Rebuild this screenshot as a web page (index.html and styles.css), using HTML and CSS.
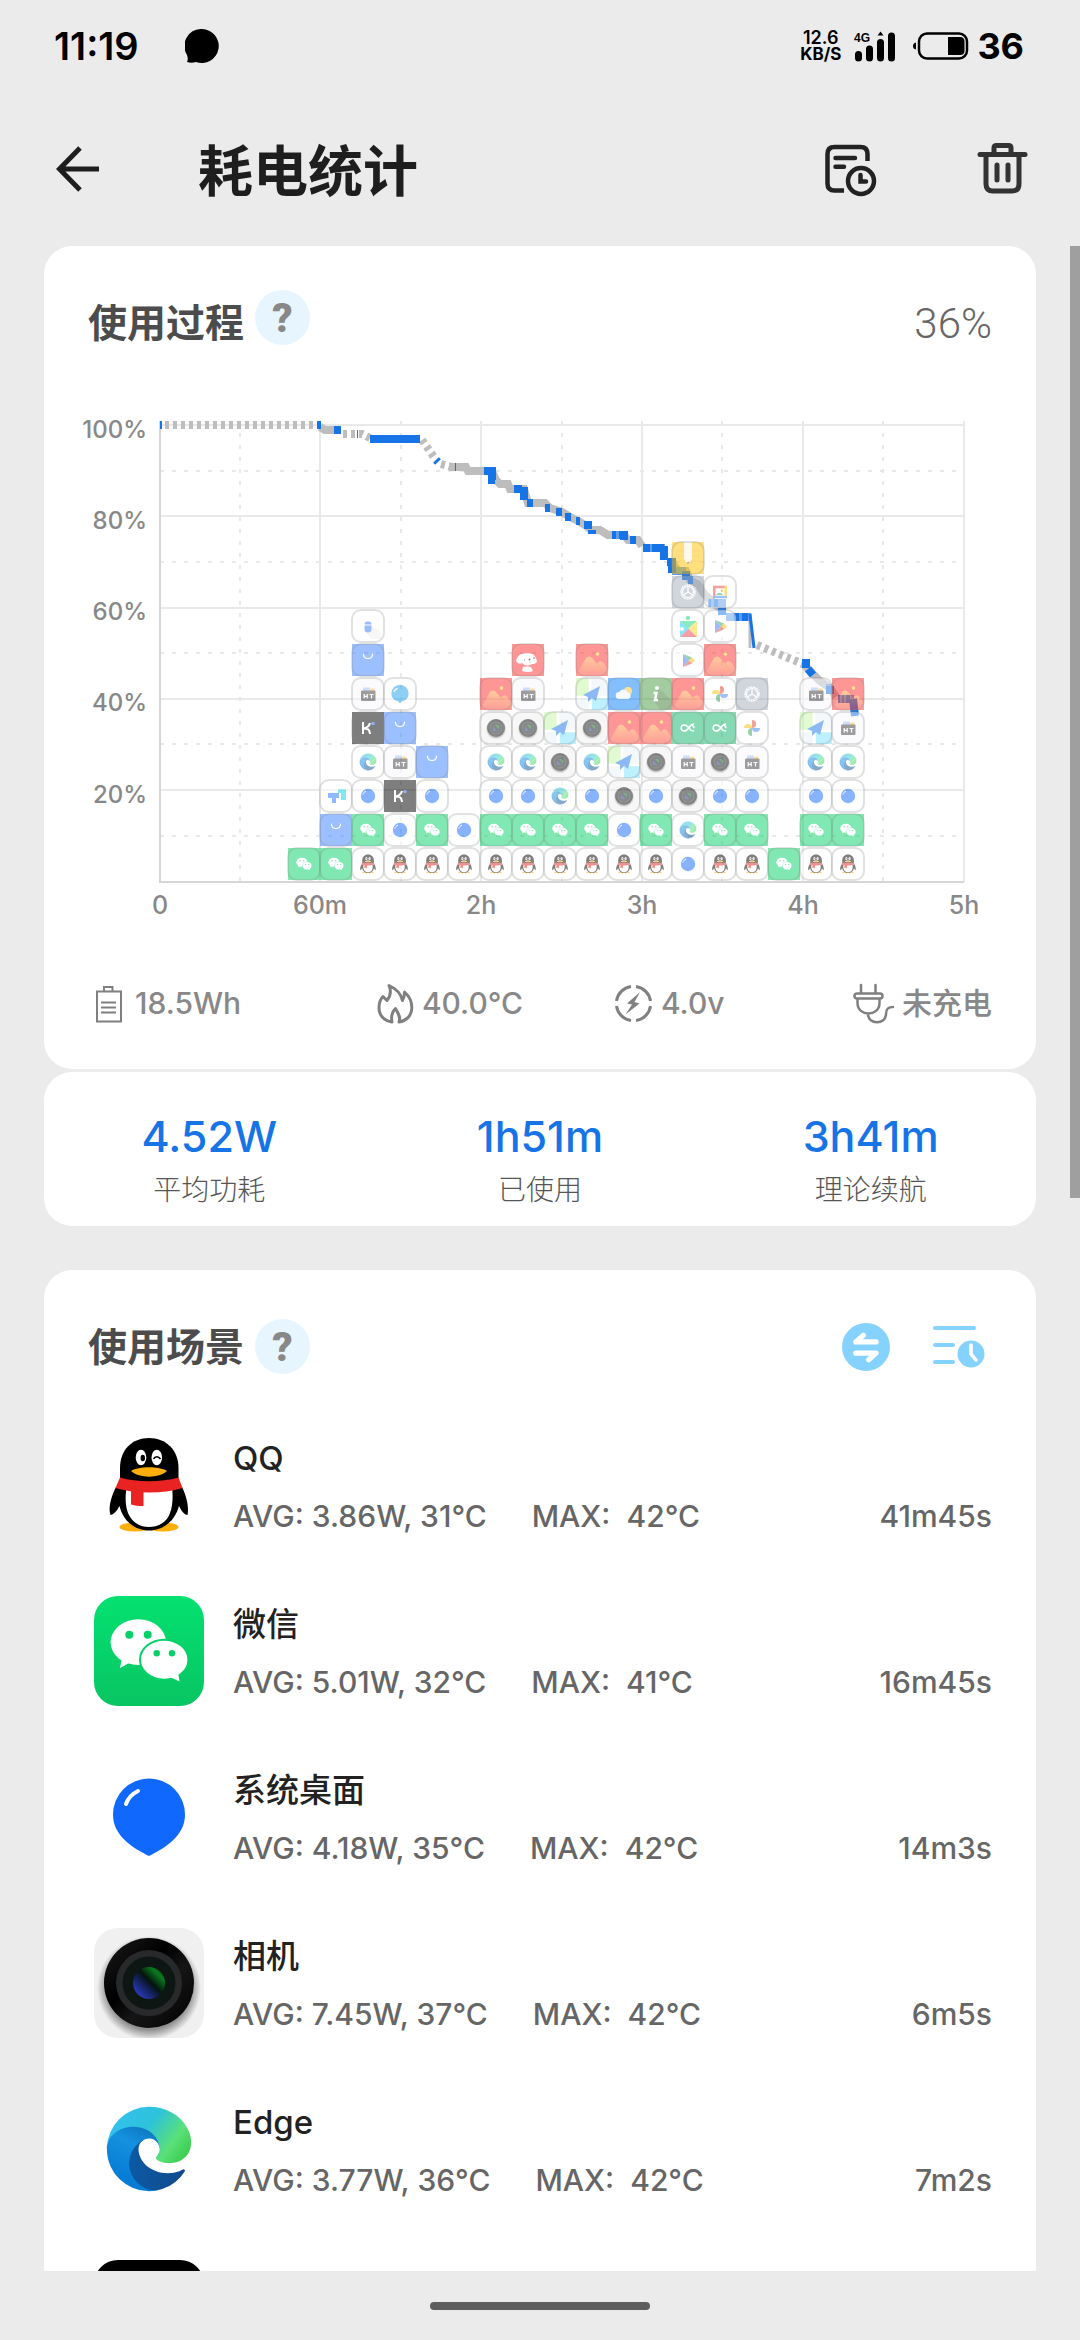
FILE: index.html
```html
<!DOCTYPE html>
<html lang="zh-CN">
<head>
<meta charset="utf-8">
<meta name="viewport" content="width=device-width, initial-scale=1">
<title>耗电统计</title>
<link rel="stylesheet" href="styles.css">
</head>
<body>
<svg class="sprite" aria-hidden="true">
  <defs>
    <linearGradient id="g-wx" x1="0" y1="0" x2="0" y2="1"><stop offset="0" stop-color="#04e170"/><stop offset="1" stop-color="#08c562"/></linearGradient>
    <linearGradient id="g-edge1" x1="0" y1="0" x2="1" y2="0"><stop offset="0" stop-color="#0c5aa6"/><stop offset="1" stop-color="#114a8b"/></linearGradient>
    <linearGradient id="g-edge2" x1="0.6" y1="0" x2="0.2" y2="1"><stop offset="0" stop-color="#0f75bd"/><stop offset="0.3" stop-color="#1591e0"/><stop offset="1" stop-color="#0074d0"/></linearGradient>
    <linearGradient id="g-edge3" x1="0" y1="0.2" x2="1" y2="0.7"><stop offset="0" stop-color="#36bff2"/><stop offset="0.45" stop-color="#2cc3da"/><stop offset="0.8" stop-color="#5be078"/><stop offset="1" stop-color="#3fcf55"/></linearGradient>
    <linearGradient id="g-lens" x1="0.1" y1="0.9" x2="0.9" y2="0.1"><stop offset="0" stop-color="#2c40c8"/><stop offset="0.35" stop-color="#14205c"/><stop offset="0.55" stop-color="#04130c"/><stop offset="0.85" stop-color="#087a1e"/><stop offset="1" stop-color="#045012"/></linearGradient>
    <linearGradient id="g-ring" x1="0" y1="0" x2="1" y2="1"><stop offset="0" stop-color="#1c1c1c"/><stop offset="0.4" stop-color="#000"/><stop offset="0.6" stop-color="#151515"/><stop offset="1" stop-color="#000"/></linearGradient>
    <radialGradient id="g-shadow"><stop offset="0.8" stop-color="#000" stop-opacity="0.4"/><stop offset="1" stop-color="#000" stop-opacity="0"/></radialGradient>
    <linearGradient id="g-hill" x1="0" y1="0" x2="0" y2="1"><stop offset="0" stop-color="#ff9a3c"/><stop offset="1" stop-color="#ff3a34"/></linearGradient>
  </defs>
  <symbol id="qq" viewBox="0 0 110 110">
    <ellipse cx="41" cy="97" rx="15.500" ry="4.500" fill="#fbae0c"/><ellipse cx="69" cy="97" rx="15.500" ry="4.500" fill="#fbae0c"/>
    <path d="M22 57C17 67 14 78 16.500 85c2 0 6-3 9-9C29 91 41 100.500 55 100.500S81 91 85 76c3 6 6 9 8.500 9C95 78 93 67 88 57Z"/>
    <path d="M26 50V38C26 20 38 8 55 8s29.500 12 29.500 30v14H26Z"/>
    <path d="M33 56c-2 9-2 19 1 27 4 9 11 14 21 14s18-5 21-14c3-8 3-18 2-27Z" fill="#fff"/>
    <path d="M26 47.500c17 5 41 5 58.500 0L88.500 58C69 64 42 64 21.500 58Z" fill="#e92322"/>
    <path d="M37 60h12.500v16C45 76 41 76 37 74.500Z" fill="#e92322"/>
    <ellipse cx="47" cy="27.500" rx="5.300" ry="7.700" fill="#fff"/><ellipse cx="62.800" cy="27.500" rx="5.300" ry="7.700" fill="#fff"/>
    <ellipse cx="48.800" cy="28" rx="2.200" ry="3.300"/><path d="M59.500 29c1.500-3 5-3 7 0" fill="none" stroke="#000" stroke-width="1.600"/>
    <path d="M37 41c8-5 28-5 36 0-8 7.500-28 7.500-36 0Z" fill="#fbae0c"/>
  </symbol>
  <symbol id="wx" viewBox="0 0 110 110">
    <ellipse cx="44.300" cy="46.200" rx="27.700" ry="22.900" fill="#fff"/><path d="M28 62l-2 10 9-5Z" fill="#fff"/>
    <ellipse cx="70.200" cy="63.700" rx="24.200" ry="20" fill="#fff" stroke="#06d169" stroke-width="2"/><path d="M76 81l9.500 4.500L84 76Z" fill="#fff"/>
    <g fill="#06d169"><circle cx="35.300" cy="38.700" r="4"/><circle cx="53.700" cy="38.700" r="4"/><circle cx="62.700" cy="57.300" r="3.200"/><circle cx="78" cy="57.300" r="3.200"/></g>
  </symbol>
  <symbol id="home" viewBox="0 0 110 110"><path d="M55 94C39 86 19 74 19 52.500a36 36 0 0 1 72 0C91 74 71 86 55 94Z" fill="#1168fd"/><path d="M32 42c2-6 6-10 12-13" fill="none" stroke="#fff" stroke-width="4" stroke-linecap="round"/></symbol>
  <symbol id="dot" viewBox="0 0 110 110"><circle cx="55" cy="55" r="36" fill="#1168fd"/><path d="M30 46c2-7 6-11 13-14" fill="none" stroke="#fff" stroke-width="5" stroke-linecap="round"/></symbol>
  <symbol id="sky" viewBox="0 0 110 110"><path d="M55 102L44 90C24 87 12 71 12 52a43 43 0 0 1 86 0c0 19-12 35-32 38Z" fill="#1fa0ee"/><path d="M26 43c2-8 8-12 14-15" fill="none" stroke="#fff" stroke-width="6" stroke-linecap="round"/></symbol>
  <symbol id="camera" viewBox="0 0 110 110">
    <circle cx="55" cy="60" r="52" fill="url(#g-shadow)"/><circle cx="55" cy="55" r="45" fill="url(#g-ring)"/><circle cx="55" cy="55" r="33" fill="#28292b"/><circle cx="55" cy="55" r="26.500" fill="#0e1613"/><circle cx="55" cy="55" r="16" fill="url(#g-lens)"/>
  </symbol>
  <symbol id="edge" viewBox="-39 -39 334 334">
    <path fill="url(#g-edge1)" d="M231 190.500c-3.400 1.800-6.900 3.400-10.500 4.700a101.500 101.500 0 0 1-35.900 6.500c-47.300 0-88.500-32.500-88.500-74.300 0-11.400 6.400-21.900 16.400-27.300-42.800 1.800-53.800 46.400-53.800 72.500 0 73.900 68.100 81.400 82.800 81.400 7.900 0 19.800-2.300 27-4.600l1.300-.4a128.300 128.300 0 0 0 66.600-52.800 4 4 0 0 0-5.400-5.700z"/>
    <path fill="url(#g-edge2)" d="M105.700 241.400a79.200 79.200 0 0 1-22.700-21.300 80.700 80.700 0 0 1 29.500-120c3.200-1.500 8.500-4.100 15.600-4a32.400 32.400 0 0 1 25.700 13 31.900 31.900 0 0 1 6.300 18.700c0-.2 24.500-79.600-80-79.600-43.900 0-80 41.600-80 78.200a130.200 130.200 0 0 0 12.100 56 128 128 0 0 0 156.400 67 75.500 75.500 0 0 1-62.800-8z"/>
    <path fill="url(#g-edge3)" d="M152.300 148.900c-.9 1-3.300 2.500-3.300 5.700 0 2.600 1.700 5.100 4.700 7.200 14.400 10 41.500 8.700 41.600 8.700 10.700 0 21.100-2.900 30.300-8.300A61.400 61.400 0 0 0 256 109.100c.3-22.400-8-37.300-11.300-43.900C223.500 23.900 177.700 0 128 0A128 128 0 0 0 0 126.200c.5-36.500 36.800-66 80-66 3.500 0 23.500.3 42 10.100a72.600 72.600 0 0 1 30.900 29.300c6.100 10.600 7.200 24.100 7.200 29.500s-2.700 13.300-7.800 19.800z"/>
  </symbol>
  <symbol id="bag" viewBox="0 0 32 32"><path d="M11.500 10c0 6 9 6 9 0" fill="none" stroke="#fff" stroke-width="1.200" stroke-linecap="round"/></symbol>
  <symbol id="bug" viewBox="0 0 32 32"><path d="M18 14l11 9v6H19l-6-8Z" fill="#f0f0f0"/><path d="M12.500 15.500h7V19a3.500 3.500 0 0 1-7 0Zm0-1a3.500 3 0 0 1 7 0Z" fill="#3c7af5"/></symbol>
  <symbol id="team" viewBox="0 0 32 32"><path d="M18 9.500h8V20h-5v-7h-3Z" fill="#00d5e8"/><path d="M8 13h11v5h-3v5h-4v-5H8Z" fill="#2277ff"/></symbol>
  <symbol id="kiwi" viewBox="0 0 32 32"><path d="M11 10v12M18 11c-1 4-4 5-7 5.500 4 0 6.500 0 7 5.500" fill="none" stroke="#fff" stroke-width="2"/><circle cx="21" cy="11.500" r="1.800" fill="#2b62f5"/></symbol>
  <symbol id="tools" viewBox="0 0 32 32"><path d="M11 13v-3.500h7V13Z" fill="#9bbcff"/><path d="M17 10.500h5.500V13H17Z" fill="#ffc240"/><rect x="9" y="12.500" width="14.500" height="10.500" rx="1" fill="#3c3c3c"/><path d="M12.200 16v4.500m3-4.500v4.500m-3-2.200h3M17.500 16.500h4m-2 0v4" fill="none" stroke="#fff" stroke-width="1.200"/></symbol>
  <symbol id="gallery" viewBox="0 0 32 32"><path d="M0 32L10 14c2-2 4-2 6 0l5 6c3-4 5-3 7 0l4 6v6Z" fill="url(#g-hill)"/><path d="M21 20l8 9" stroke="#ff5a38" stroke-width="1"/><circle cx="21.500" cy="10" r="1.800" fill="#ffd02e"/></symbol>
  <symbol id="dog" viewBox="0 0 32 32"><path d="M4 17c1-4 3-6 5-7 4-1 9-1 12 0l3 4 1 4-3 2h-2c-2 2-8 2-10-1-2 1-4 1-6-2ZM11 23q4-1 8 0l2 4q-5 2-11 0Z" fill="#fff"/><circle cx="17.500" cy="15.500" r="1"/><circle cx="22" cy="14" r=".8"/><circle cx="12.500" cy="16" r=".5"/><circle cx="18" cy="18" r=".5"/></symbol>
  <symbol id="map" viewBox="0 0 32 32"><path d="M0 0h13v17L0 20Z" fill="#c4f7a4"/><path d="M16 20h16v12H16Z" fill="#7ee5ff"/><path d="M14 0v32M0 19l32 0" stroke="#fff" stroke-width="2.500"/><path d="M7 17L24 8 20 23l-4-3-4 4v-5Z" fill="#1b76ea"/></symbol>
  <symbol id="weather" viewBox="0 0 32 32"><circle cx="20" cy="13" r="4" fill="#ffc42d"/><path d="M11 21a3.500 3.500 0 0 1 .5-7c1-3.500 7-3.500 8 .5 4 0 4.500 6.500 0 6.500Z" fill="#eef6ff"/></symbol>
  <symbol id="info" viewBox="0 0 32 32"><path d="M18 9l14 14v9H20l-6-9Z" fill="#3d7d34"/><circle cx="17" cy="10" r="2" fill="#fff"/><path d="M13.500 15h3l-1.500 7h3" fill="none" stroke="#fff" stroke-width="2.500"/></symbol>
  <symbol id="loop" viewBox="0 0 32 32"><path d="M21.500 12C17 12 17 19 12.500 19s-4.500-6 0-6 4 6 9 6M20 12.500l2 3" fill="none" stroke="#fff" stroke-width="1.600" stroke-linecap="round"/></symbol>
  <symbol id="photos" viewBox="0 0 32 32"><path d="M16 16V8a4 4 0 0 1 0 8Z" fill="#ea4335"/><path d="M16 16h8a4 4 0 0 1-8 0Z" fill="#4285f4"/><path d="M16 16v8a4 4 0 0 1 0-8Z" fill="#34a853"/><path d="M16 16H8a4 4 0 0 1 8 0Z" fill="#fbbc04"/></symbol>
  <symbol id="play" viewBox="0 0 32 32"><path d="M11 10v13l6-6.500Z" fill="#3d7cf5"/><path d="M11 10l6 6.500 3-3Z" fill="#34a853"/><path d="M20 13.500l-3 3 3 3 3-3Z" fill="#fbbc04"/><path d="M11 23l6-6.500 3 3Z" fill="#ea4335"/></symbol>
  <symbol id="puzzle" viewBox="0 0 32 32"><path d="M8 11h17L16 19Z" fill="#17d67d"/><circle cx="16" cy="8" r="2.200" fill="#17d67d"/><path d="M8 11l9 8-9 8Z" fill="#1cc8f5"/><path d="M25 11l-9 8 9 8Z" fill="#ffd52e"/><path d="M8 27l8.500-8 8.500 8Z" fill="#ee4050"/><circle cx="10" cy="19" r="2" fill="#fff"/></symbol>
  <symbol id="gear" viewBox="0 0 32 32"><circle cx="16" cy="16" r="7" fill="none" stroke="#fff" stroke-width="1.400" stroke-dasharray="2 .6"/><circle cx="16" cy="16" r="5.500" fill="none" stroke="#fff" stroke-width="1.200"/><path d="M16 16V11M16 16l4.500 3M16 16l-4.500 3" stroke="#fff" stroke-width="1.300"/></symbol>
  <symbol id="frame" viewBox="0 0 32 32"><path d="M9 11h14" stroke="#ea4335" stroke-width="2.500"/><path d="M10.200 12v10" stroke="#ea4335" stroke-width="2.500"/><path d="M9 21h14" stroke="#4285f4" stroke-width="2.500"/><path d="M21.800 10v10" stroke="#fbbc04" stroke-width="2.500"/><path d="M12 19c2-3 5-3 7 0Z" fill="#34a853"/><circle cx="18" cy="14.500" r="1.200" fill="#fbbc04"/></symbol>
  <symbol id="pencil" viewBox="0 0 32 32"><path d="M3 9h26M3 14h26M3 19h26" stroke="#f9b000" stroke-width="1"/><path d="M12 0h8v17l-4 6-4-6Z" fill="#fff4dc"/><path d="M14.700 20h2.600L16 23Z" fill="#8a5a20"/></symbol>
</svg>

<header class="status">
  <div class="status-left">
    <time class="clock">11:19</time>
    <svg width="34" height="34" viewBox="0 0 34 34"><path d="M17 0a17 17 0 1 1-6 33c-3 1-6 1-9 0 1-2 1-4 0-7A17 17 0 0 1 17 0Z"/></svg>
  </div>
  <div class="status-right">
    <div class="net"><span>12.6</span><b>KB/S</b></div>
    <svg class="signal" width="42" height="32" viewBox="0 0 42 32"><text x="1" y="12" class="signal-text">4G</text><g stroke="#000" stroke-width="7" stroke-linecap="round"><path d="M5.500 24.500V28M16.500 19v9M27.500 12.500V28M38.500 6v22"/></g><path d="M24.500 5.500l3-4 3 4Z"/></svg>
    <svg class="battery" width="56" height="28" viewBox="0 0 56 28"><rect x="6" y="1.500" width="48" height="25" rx="8" fill="none" stroke="#000" stroke-width="2.500"/><path d="M35 5h12q4.500 0 4.500 4.500v9q0 4.500-4.500 4.500H35Z"/><path d="M3 10.500v7Q0 17 0 14t3-3.500Z"/></svg>
    <span class="charge">36</span>
  </div>
</header>

<div class="appbar">
  <button class="icon-btn" aria-label="返回"><svg width="44" height="46" viewBox="0 0 44 46" fill="none" stroke="#1e1e1e" stroke-width="5"><path d="M43 23H4M24 2L3.500 23 24 44"/></svg></button>
  <h1>耗电统计</h1>
  <div class="appbar-actions">
    <button class="icon-btn" aria-label="历史记录"><svg width="60" height="58" viewBox="0 0 60 58" fill="none" stroke="#222" stroke-width="4.500" stroke-linecap="round"><path d="M47.500 21V14q0-7-7-7h-26q-7 0-7 7v29.500q0 7 7 7H24" stroke-linecap="butt"/><path d="M15.500 18H35M15.500 26.700H24"/><circle cx="41" cy="41" r="13"/><path d="M40.500 35v6.500H46"/></svg></button>
    <button class="icon-btn" aria-label="删除"><svg width="60" height="58" viewBox="0 0 60 58" fill="none" stroke="#333" stroke-width="5" stroke-linecap="round"><path d="M8 14.500H53"/><path d="M22 13V8q0-2.500 2.500-2.500h12Q39 5.500 39 8v5"/><path d="M14 16v28q0 7 7 7h19q7 0 7-7V16M25 25v15M36 25v15"/></svg></button>
  </div>
</div>

<main class="page">
  <section class="card usage">
    <div class="card-head tall">
      <h2>使用过程</h2>
      <button class="help" aria-label="帮助">?</button>
      <span class="level">36%</span>
    </div>
    <svg class="chart" viewBox="88 400 904 530" role="img" aria-label="电量曲线">
      <g class="grid">
        <path d="M160 425H964M160 516H964M160 608H964M160 699H964M160 790H964M320 421V882M481 421V882M642 421V882M803 421V882M964 421V882"/>
        <path stroke-dasharray="4 8" d="M160 471H960M160 562H960M160 653H960M160 744H960M160 836H960M240 421V882M401 421V882M562 421V882M722 421V882M883 421V882"/>
        <path class="axis" d="M160 421V883M160 882H964"/>
      </g>
      <g class="line idle">
        <path stroke-dasharray="4 4" d="M165 425H317M343 434H362L370 438M422 440L436 460M441 464L452 467"/>
        <path d="M320 427L325 430H334M449 467H466L468 471H492L496 480L500 484H508L510 489H524L528 503H545L550 508L562 512L570 517L578 521L585 525L591 530H600L608 535H624L628 540H638L642 546M672 562L678 571H686L690 580L698 584L704 594L714 603L724 612"/>
        <path stroke-width="3" d="M750 614V648"/>
        <path stroke-dasharray="4 4" d="M757 645L803 664"/>
        <path d="M803 664L812 673L820 681L830 688L836 697"/>
      </g>
      <g class="line active pale"><path d="M484 471H492M612 535H626M643 548H665M672 571H686M708 603H722V612M726 617H751M826 688H832M838 699H854"/></g>
      <g class="line active">
        <path d="M160 425H162M317 425H321M334 430H341M357 434H358M370 439H420M436 460L438 462M455 467H456M484 471H492V480H495M514 489H522M524 487V500M527 503H533M545 508H550M556 512H562M565 517H571M576 521H580M584 525H592M592 530V534M612 535H616M619 535H622M624 531V540M630 540H636M643 548H650M652 548H664M664 546V560M667 562H670M672 558V573M686 571V580M688 580H693M709 603H711M714 603H718M722 608V615M734 617H739M742 617H748M806 659V668M808 669L813 675M830 686V694M838 699H840M842 699H844M846 699H850M853 699L855 716"/>
        <path stroke-width="3" d="M750 614L754 648"/>
      </g>
      <g id="tiles"></g>
      <g class="tick end">
        <text x="147" y="438">100%</text><text x="147" y="529">80%</text><text x="147" y="620">60%</text><text x="147" y="711">40%</text><text x="147" y="803">20%</text>
      </g>
      <g class="tick">
        <text x="160" y="914">0</text><text x="320" y="914">60m</text><text x="481" y="914">2h</text><text x="642" y="914">3h</text><text x="803" y="914">4h</text><text x="964" y="914">5h</text>
      </g>
    </svg>
    <ul class="facts">
      <li><svg width="40" height="44" viewBox="0 0 40 44" stroke-width="2"><path d="M9 10.500H33V40.500H9ZM16 10V6H24.500V10M13 21.500H28M13 26.500H28M13 31.500H28"/></svg>18.5Wh</li>
      <li><svg width="40" height="44" viewBox="0 0 40 44" stroke-width="3" stroke-linejoin="round"><path d="M14 4.500C22 8 26 13 27.500 19.500C29 17 29.500 14 29.500 11C34 15 37 21 36.800 27C36.500 35 31 40 24 41C26 36 23 32 20.500 27.500C16 32 16 36 17 41C9 40 4 34 4 27C4 22 5.500 18 8 15.500L12 19.500C15.500 15 16 9 14 4.500Z"/></svg>40.0°C</li>
      <li><svg width="40" height="44" viewBox="0 0 40 44" stroke-width="3"><path d="M17 5.500A17 17 0 0 0 2.500 20M22 5.500A17 17 0 0 1 36.500 20M17 39.500A17 17 0 0 1 2.500 25M22 39.500A17 17 0 0 0 36.500 25"/><path class="solid" d="M26 11L13 22.500 18 23.500 11.500 33.500 25.500 22.500 20.500 21Z"/></svg>4.0v</li>
      <li><svg width="42" height="44" viewBox="0 0 42 44" stroke-width="2.500" stroke-linecap="round"><path d="M8 4v8M22.500 4v8"/><rect x="1.500" y="12.500" width="28" height="5" rx="2.500"/><path d="M4.500 18v4c0 14 22 14 22 0V18M15 33c0 11 18 11 18 0 0-5 2-7 7-7"/></svg>未充电</li>
    </ul>
  </section>

  <section class="card summary">
    <div><strong>4.52W</strong><span>平均功耗</span></div>
    <div><strong>1h51m</strong><span>已使用</span></div>
    <div><strong>3h41m</strong><span>理论续航</span></div>
  </section>

  <section class="card scenes">
    <div class="card-head">
      <h2>使用场景</h2>
      <button class="help" aria-label="帮助">?</button>
      <div class="head-actions">
        <button class="icon-btn" aria-label="切换"><svg width="48" height="48" viewBox="0 0 47 47"><circle cx="23.500" cy="23.500" r="23.500" fill="#86d2ff"/><path d="M33.500 18.500H13.500L21 12M13.500 29.500H33.500L26 36" fill="none" stroke="#fff" stroke-width="5" stroke-linecap="round" stroke-linejoin="round"/></svg></button>
        <button class="icon-btn" aria-label="排序"><svg width="54" height="44" viewBox="0 0 54 44" fill="none" stroke="#86d2ff" stroke-width="4" stroke-linecap="round"><path d="M3 3H42M3 20H21M3 37H21"/><circle cx="39" cy="29" r="13.500" fill="#86d2ff" stroke="none"/><path d="M39 20v9l5 6" stroke="#fff" stroke-width="3.500"/></svg></button>
      </div>
    </div>
    <ul class="apps">
      <li><svg class="app-icon"><use href="#qq"/></svg><div class="app-text"><h3>QQ</h3><p><span class="avg">AVG: 3.86W, 31°C</span><span class="max">MAX:</span><span>42°C</span><span class="dur">41m45s</span></p></div></li>
      <li><svg class="app-icon"><rect width="110" height="110" rx="24" fill="url(#g-wx)"/><use href="#wx"/></svg><div class="app-text"><h3>微信</h3><p><span class="avg">AVG: 5.01W, 32°C</span><span class="max">MAX:</span><span>41°C</span><span class="dur">16m45s</span></p></div></li>
      <li><svg class="app-icon"><use href="#home"/></svg><div class="app-text"><h3>系统桌面</h3><p><span class="avg">AVG: 4.18W, 35°C</span><span class="max">MAX:</span><span>42°C</span><span class="dur">14m3s</span></p></div></li>
      <li><svg class="app-icon"><rect width="110" height="110" rx="24" fill="#f0f0f0"/><use href="#camera"/></svg><div class="app-text"><h3>相机</h3><p><span class="avg">AVG: 7.45W, 37°C</span><span class="max">MAX:</span><span>42°C</span><span class="dur">6m5s</span></p></div></li>
      <li><svg class="app-icon"><use href="#edge"/></svg><div class="app-text"><h3>Edge</h3><p><span class="avg">AVG: 3.77W, 36°C</span><span class="max">MAX:</span><span>42°C</span><span class="dur">7m2s</span></p></div></li>
      <li><svg class="app-icon"><rect width="110" height="110" rx="24" fill="#000"/></svg></li>
    </ul>
  </section>
  <div class="scrollbar"></div>
</main>
<footer class="gesture"><span></span></footer>
<script src="chart.js"></script>
</body>
</html>
```
FILE: chart.js
```js
// Foreground apps per time slot, bottom to top. Each column is 32 units wide.
const columns = [
  "wx",
  "wx bag team",
  "qq wx dot edge kiwi tools bag bug",
  "qq dot kiwi tools bag sky",
  "qq wx dot bag",
  "qq dot",
  "qq wx dot edge camera gallery",
  "qq wx dot edge camera tools dog",
  "qq wx edge camera map",
  "qq wx dot edge camera map gallery",
  "qq dot camera map gallery weather",
  "qq wx dot camera gallery info",
  "dot edge camera tools loop gallery play puzzle gear pencil",
  "qq wx dot camera loop photos gallery play frame",
  "qq wx dot tools photos gear",
  "wx",
  "qq wx dot edge map tools",
  "qq wx dot edge tools gallery"
];
const fills = {
  wx: "#06d169", bag: "#3b82ff", kiwi: "#000", gallery: "#ff3030", dog: "#ff3030",
  weather: "#0a80ff", info: "#4a9d44", loop: "#0fb468", gear: "#a4afbd", pencil: "#ffc000"
};
const soft = { map: "#eaf3f6", camera: "#f0f0f0", tools: "#f8f9fd" };
const large = ["qq", "wx", "dot", "sky", "camera", "edge"];

let markup = "";
columns.forEach((column, c) => {
  column.split(" ").forEach((app, r) => {
    const x = 288 + c * 32;
    const y = 848 - r * 34;
    const inset = large.includes(app) ? 5 : 0;
    const size = 32 - inset * 2;
    const radius = fills[app] ? 0 : 8;
    markup += `<g class="tile"><rect x="${x}" y="${y}" width="32" height="32" rx="${radius}" fill="${fills[app] || soft[app] || "#fff"}"/>` +
      `<use href="#${app}" x="${x + inset}" y="${y + inset}" width="${size}" height="${size}"/></g>` +
      `<rect class="tile-edge" x="${x}" y="${y}" width="32" height="32" rx="9"/>`;
  });
});
document.getElementById("tiles").innerHTML = markup;
```
FILE: styles.css
```css
* { box-sizing: border-box; margin: 0; padding: 0; }

body {
  display: flex;
  flex-direction: column;
  height: 100vh;
  overflow: hidden;
  background: #ebebeb;
  color: #222;
  font-family: Inter, "Noto Sans CJK SC", sans-serif;
}

ul { list-style: none; }
svg { display: block; flex: none; }
button { border: 0; background: none; font: inherit; color: inherit; }
.sprite { position: absolute; width: 0; height: 0; }
.icon-btn { display: flex; align-items: center; }

.status {
  display: flex;
  flex: none;
  justify-content: space-between;
  align-items: center;
  height: 92px;
  padding: 0 56px 0 54px;
  color: #000;
}
.status-left { display: flex; align-items: center; gap: 46px; }
.status-right { display: flex; align-items: center; }
.clock { font-size: 38px; font-weight: 600; line-height: 44px; }
.charge { font-size: 36px; font-weight: 700; line-height: 44px; }
.net { display: flex; flex-direction: column; align-items: center; font-size: 18px; font-weight: 600; line-height: 16px; }
.net b { font-weight: 700; font-size: 17px; }
.signal { margin-left: 12px; }
.signal-text { font: 600 12px "Liberation Sans", sans-serif; }
.battery { margin: 0 8px 0 18px; }

.appbar { display: flex; flex: none; align-items: center; height: 154px; padding: 0 48px 0 56px; }
h1 { margin-left: 98px; padding-top: 4px; font-size: 55px; font-weight: 700; line-height: 64px; color: #1e1e1e; }
.appbar-actions { display: flex; gap: 92px; margin-left: auto; }

.page { position: relative; flex: 1; min-height: 0; overflow: hidden; padding: 0 44px; }
.scrollbar { position: absolute; top: 0; right: 0; width: 10px; height: 47%; background: #9f9f9f; }

.card { border-radius: 28px; background: #fff; }
.usage { padding: 44px 44px 43px; }
.card-head { display: flex; align-items: center; height: 55px; }
.card-head.tall { height: 64px; }
.card-head.tall .help { align-self: flex-start; }
h2 { font-size: 39px; font-weight: 700; line-height: 55px; color: #4c4c4c; }
.help { width: 55px; height: 55px; margin-left: 11px; border-radius: 50%; background: #e7f5ff; color: #888; font: 900 40px/58px Roboto, sans-serif; }
.level { margin-left: auto; padding-top: 4px; font: 300 42px/50px Roboto, sans-serif; color: #666; }

.chart { width: 100%; height: auto; margin-top: 46px; overflow: visible; }
.grid { fill: none; stroke: #e9e9e9; stroke-width: 2; }
.grid .axis { stroke: #d6d6d6; }
.line { fill: none; stroke-width: 8; }
.idle { stroke: #bdbdbd; }
.active { stroke: #1674e6; }
.active.pale { stroke: #5c9eed; }
.tile { opacity: 0.5; }
.tile-edge { fill: none; stroke: #888; stroke-opacity: 0.25; stroke-width: 2; }
.tick { font-size: 25px; font-weight: 500; fill: #888; text-anchor: middle; }
.tick.end { font-size: 24px; text-anchor: end; }

.facts { display: grid; grid-template-columns: 12fr 10fr 10fr auto; margin-top: 50px; font-size: 30px; font-weight: 500; line-height: 46px; color: #888; }
.facts li { display: flex; align-items: center; gap: 7px; }
.facts svg { fill: none; stroke: #808080; }
.facts .solid { fill: #808080; stroke: none; }

.summary { display: grid; grid-template-columns: 1fr 1fr 1fr; margin-top: 3px; padding: 38px 0 12px; text-align: center; }
.summary strong { display: block; font-size: 43px; font-weight: 500; line-height: 52px; color: #1674e6; }
.summary span { display: block; margin-top: 4px; font-size: 28px; font-weight: 200; line-height: 48px; color: #555; }

.scenes { margin-top: 44px; padding: 49px 44px 44px; }
.head-actions { display: flex; align-items: center; gap: 42px; margin: 0 6px 0 auto; }
.apps { display: flex; flex-direction: column; gap: 50px; margin-top: 53px; }
.apps li { display: flex; align-items: center; gap: 29px; height: 116px; padding-left: 6px; }
.app-icon { width: 110px; height: 110px; }
.app-text { flex: 1; padding-top: 4px; }
h3 { font-size: 33px; font-weight: 500; line-height: 58px; }
.app-text p { display: flex; font-size: 30px; font-weight: 500; line-height: 58px; color: #666; }
.max { margin: 0 16px 0 45px; }
.dur { margin-left: auto; }

.gesture { display: flex; flex: none; align-items: center; justify-content: center; height: 69px; }
.gesture span { width: 220px; height: 8px; border-radius: 4px; background: #5e5e5e; }
```
